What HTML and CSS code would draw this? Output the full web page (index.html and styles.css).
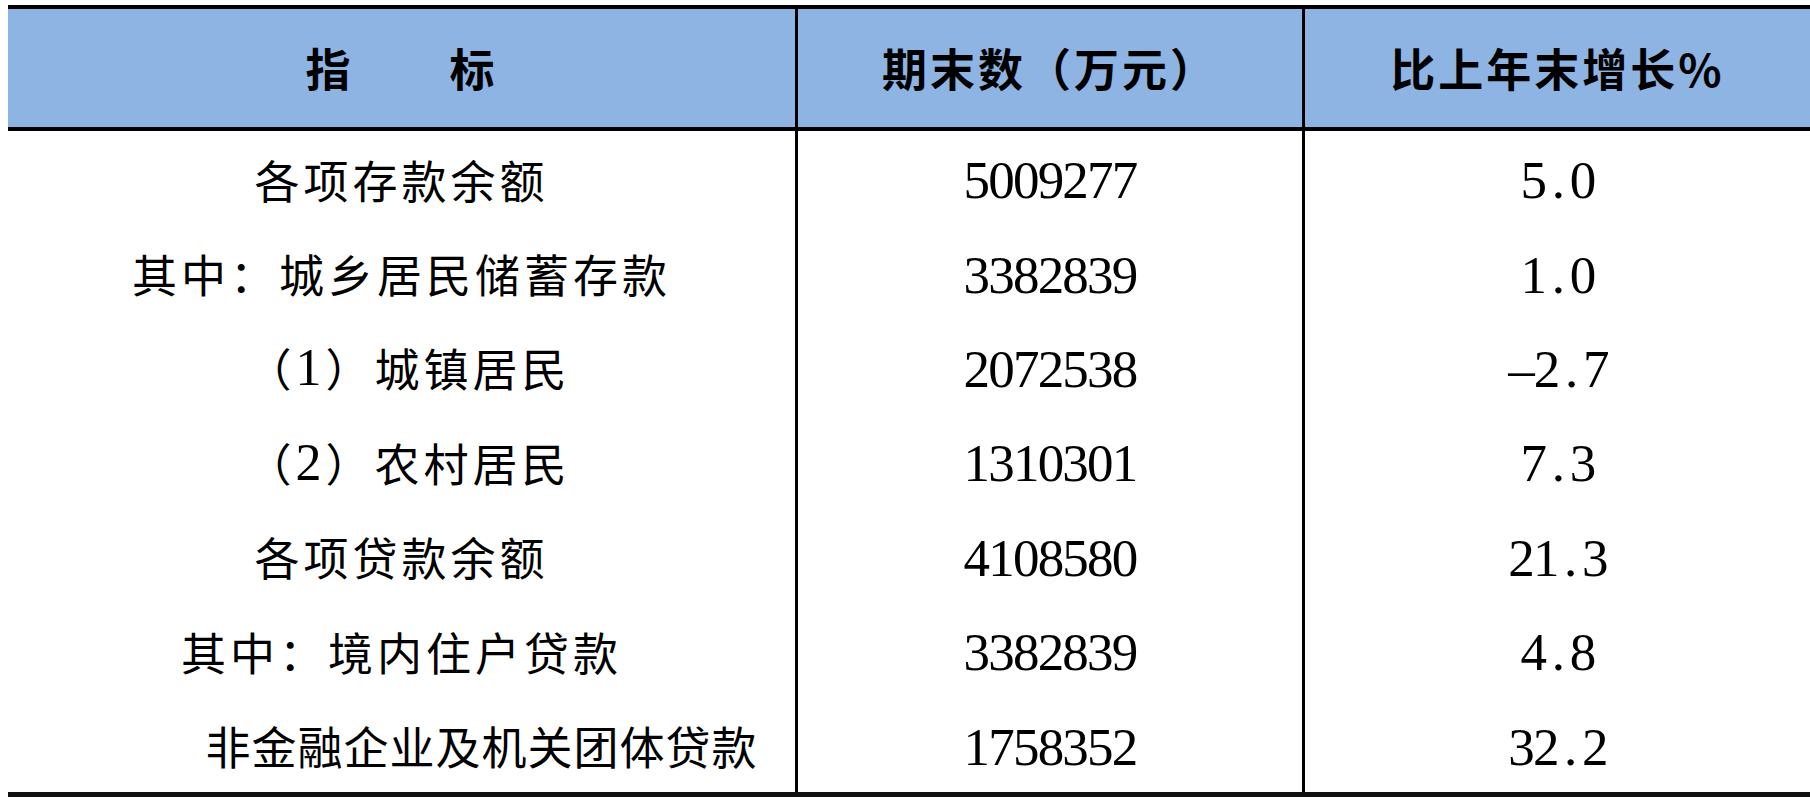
FILE: index.html
```html
<!DOCTYPE html>
<html lang="zh">
<head>
<meta charset="utf-8">
<title>存贷款</title>
<link rel="stylesheet" href="styles.css">
</head>
<body>
<div class="table">
  <div class="row head">
    <div class="cell c1">指　　标</div>
    <div class="cell c2">期末数（万元）</div>
    <div class="cell c3">比上年末增长%</div>
  </div>
  <div class="row">
    <div class="cell c1">各项存款余额</div>
    <div class="cell c2 num">5009277</div>
    <div class="cell c3 num">5<span class="pt">.</span>0</div>
  </div>
  <div class="row">
    <div class="cell c1">其中：城乡居民储蓄存款</div>
    <div class="cell c2 num">3382839</div>
    <div class="cell c3 num">1<span class="pt">.</span>0</div>
  </div>
  <div class="row">
    <div class="cell c1 sub">（<span class="n">1</span>）城镇居民</div>
    <div class="cell c2 num">2072538</div>
    <div class="cell c3 num"><span class="minus">–</span>2<span class="pt">.</span>7</div>
  </div>
  <div class="row">
    <div class="cell c1 sub">（<span class="n">2</span>）农村居民</div>
    <div class="cell c2 num">1310301</div>
    <div class="cell c3 num">7<span class="pt">.</span>3</div>
  </div>
  <div class="row">
    <div class="cell c1">各项贷款余额</div>
    <div class="cell c2 num">4108580</div>
    <div class="cell c3 num">21<span class="pt">.</span>3</div>
  </div>
  <div class="row">
    <div class="cell c1">其中：境内住户贷款</div>
    <div class="cell c2 num">3382839</div>
    <div class="cell c3 num">4<span class="pt">.</span>8</div>
  </div>
  <div class="row last">
    <div class="cell c1 indent">非金融企业及机关团体贷款</div>
    <div class="cell c2 num">1758352</div>
    <div class="cell c3 num">32<span class="pt">.</span>2</div>
  </div>
</div>
</body>
</html>
```
FILE: styles.css
```css
html, body {
  margin: 0;
  padding: 0;
  background: #ffffff;
  overflow: hidden;
}
body {
  width: 1810px;
  height: 797px;
  font-family: "Noto Sans CJK SC", "Noto Sans", sans-serif;
  color: #000;
}
.table {
  margin: 5px 0 0 8px;
  width: 1802px;
  border-top: 4px solid #000;
  border-bottom: 5px solid #111;
  box-sizing: border-box;
}
.row {
  display: grid;
  grid-template-columns: 790px 507px 1fr;
  height: 94.4px;
}
.row.head {
  height: 122px;
  background: #8db4e2;
  border-bottom: 4px solid #000;
  box-sizing: border-box;
}
.cell {
  display: flex;
  align-items: center;
  justify-content: center;
  box-sizing: border-box;
  white-space: nowrap;
  font-size: 45px;
  letter-spacing: 4px;
  font-weight: 400;
  padding-top: 2px;
}
.c1, .c2 {
  border-right: 3px solid #000;
}
.head .cell {
  font-weight: 700;
  font-size: 45px;
  letter-spacing: 3px;
  padding-top: 0;
  padding-bottom: 2px;
}
.num {
  font-family: "Liberation Serif", "Times New Roman", serif;
  font-size: 53px;
  letter-spacing: -1.8px;
  padding-top: 4px;
}
.pt {
  display: inline-block;
  width: 0.46em;
  text-align: center;
}
.minus {
  display: inline-block;
  width: 0.5em;
  text-align: center;
}
.n {
  font-family: "Liberation Serif", serif;
  font-size: 52px;
}
.sub {
  padding-left: 14px;
}
.indent {
  padding-left: 160px;
  letter-spacing: 1px;
}
```
